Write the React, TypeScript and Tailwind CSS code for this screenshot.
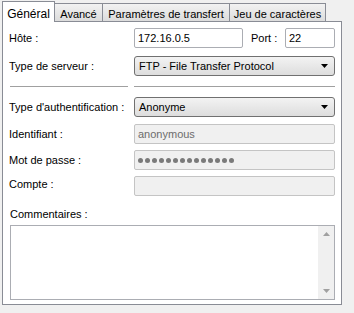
import React from 'react';

const font = { fontFamily: '"Liberation Sans", Arial, sans-serif' };

const tabs = [
  { label: 'Général', w: 'w-[53px]' },
  { label: 'Avancé', w: 'w-[49px]' },
  { label: 'Paramètres de transfert', w: 'w-[128px]' },
  { label: 'Jeu de caractères', w: 'w-[97px]' },
];

function Select({ value }: { value: string }) {
  return (
    <div className="flex h-[20px] flex-1 items-center justify-between rounded-[3px] border border-[#707070] bg-gradient-to-b from-[#f3f3f3] to-[#dddddd] pl-[4px] pr-[6px] text-[#000]">
      <span>{value}</span>
      <svg width="7" height="4" viewBox="0 0 7 4">
        <polygon points="0,0 7,0 3.5,4" fill="#000" />
      </svg>
    </div>
  );
}

function Field({ value, disabled, dots }: { value?: string; disabled?: boolean; dots?: boolean }) {
  return (
    <div
      className={
        'flex h-[20px] flex-1 items-center rounded-[2px] border px-[3px] ' +
        (disabled ? 'border-[#c4c4c4] bg-[#f0f0f0] text-[#6d6d6d]' : 'border-[#abadb3] bg-white text-black')
      }
    >
      {dots ? (
        <span className="flex gap-[2px]">
          {Array.from({ length: 14 }).map((_, i) => (
            <span key={i} className="h-[5px] w-[5px] rounded-full bg-[#7a7a7a]" />
          ))}
        </span>
      ) : (
        value
      )}
    </div>
  );
}

function Row({ label, children, className = '' }: { label: string; children: React.ReactNode; className?: string }) {
  return (
    <div className={'flex items-center ' + className}>
      <div className="w-[125px] shrink-0 whitespace-nowrap">{label}</div>
      {children}
    </div>
  );
}

export default function App() {
  return (
    <div className="h-[313px] w-[354px] bg-[#f0f0f0] text-[11px] text-black" style={font}>
      <div className="flex items-end pl-[2px] pt-[1px]">
        {tabs.map((t, i) =>
          i === 0 ? (
            <div
              key={t.label}
              className={
                t.w +
                ' relative z-10 -mb-px h-[21px] whitespace-nowrap border border-b-0 border-[#898c95] bg-white pt-[3px] text-center text-[12px]'
              }
            >
              {t.label}
            </div>
          ) : (
            <div
              key={t.label}
              className={
                t.w +
                ' -ml-px h-[18px] whitespace-nowrap border border-b-0 border-[#898c95] bg-gradient-to-b from-[#f2f2f2] to-[#dcdcdc] pt-[2px] text-center'
              }
            >
              {t.label}
            </div>
          )
        )}
      </div>
      <div className="mx-[2px] flex h-[284px] w-[340px] flex-col border border-[#898c95] bg-white px-[6px] pt-[6px]">
        <Row label="Hôte :">
          <div className="w-[109px]">
            <Field value="172.16.0.5" />
          </div>
          <div className="w-[42px] whitespace-nowrap pl-[8px]">Port :</div>
          <div className="flex-1">
            <Field value="22" />
          </div>
        </Row>
        <Row label="Type de serveur :" className="mt-[8px]">
          <Select value="FTP - File Transfer Protocol" />
        </Row>
        <div className="mt-[10px] flex">
          <div className="ml-[1px] h-px w-[118px] bg-[#a0a0a0]" />
          <div className="ml-[6px] h-px flex-1 bg-[#a0a0a0]" />
        </div>
        <Row label="Type d'authentification :" className="mt-[10px]">
          <Select value="Anonyme" />
        </Row>
        <Row label="Identifiant :" className="mt-[7px]">
          <Field value="anonymous" disabled />
        </Row>
        <Row label="Mot de passe :" className="mt-[6px]">
          <Field dots disabled />
        </Row>
        <Row label="Compte :" className="mt-[6px] items-start">
          <Field disabled />
        </Row>
        <div className="ml-[1px] mt-[10px]">Commentaires :</div>
        <div className="ml-[1px] mt-[2px] flex h-[75px] border border-[#abadb3] bg-white">
          <div className="flex-1" />
          <div className="flex w-[16px] flex-col items-center justify-between bg-[#f0f0f0] py-[6px]">
            <svg width="7" height="4" viewBox="0 0 7 4">
              <polygon points="0,4 7,4 3.5,0" fill="#a0a0a0" />
            </svg>
            <svg width="7" height="4" viewBox="0 0 7 4">
              <polygon points="0,0 7,0 3.5,4" fill="#a0a0a0" />
            </svg>
          </div>
        </div>
      </div>
    </div>
  );
}
